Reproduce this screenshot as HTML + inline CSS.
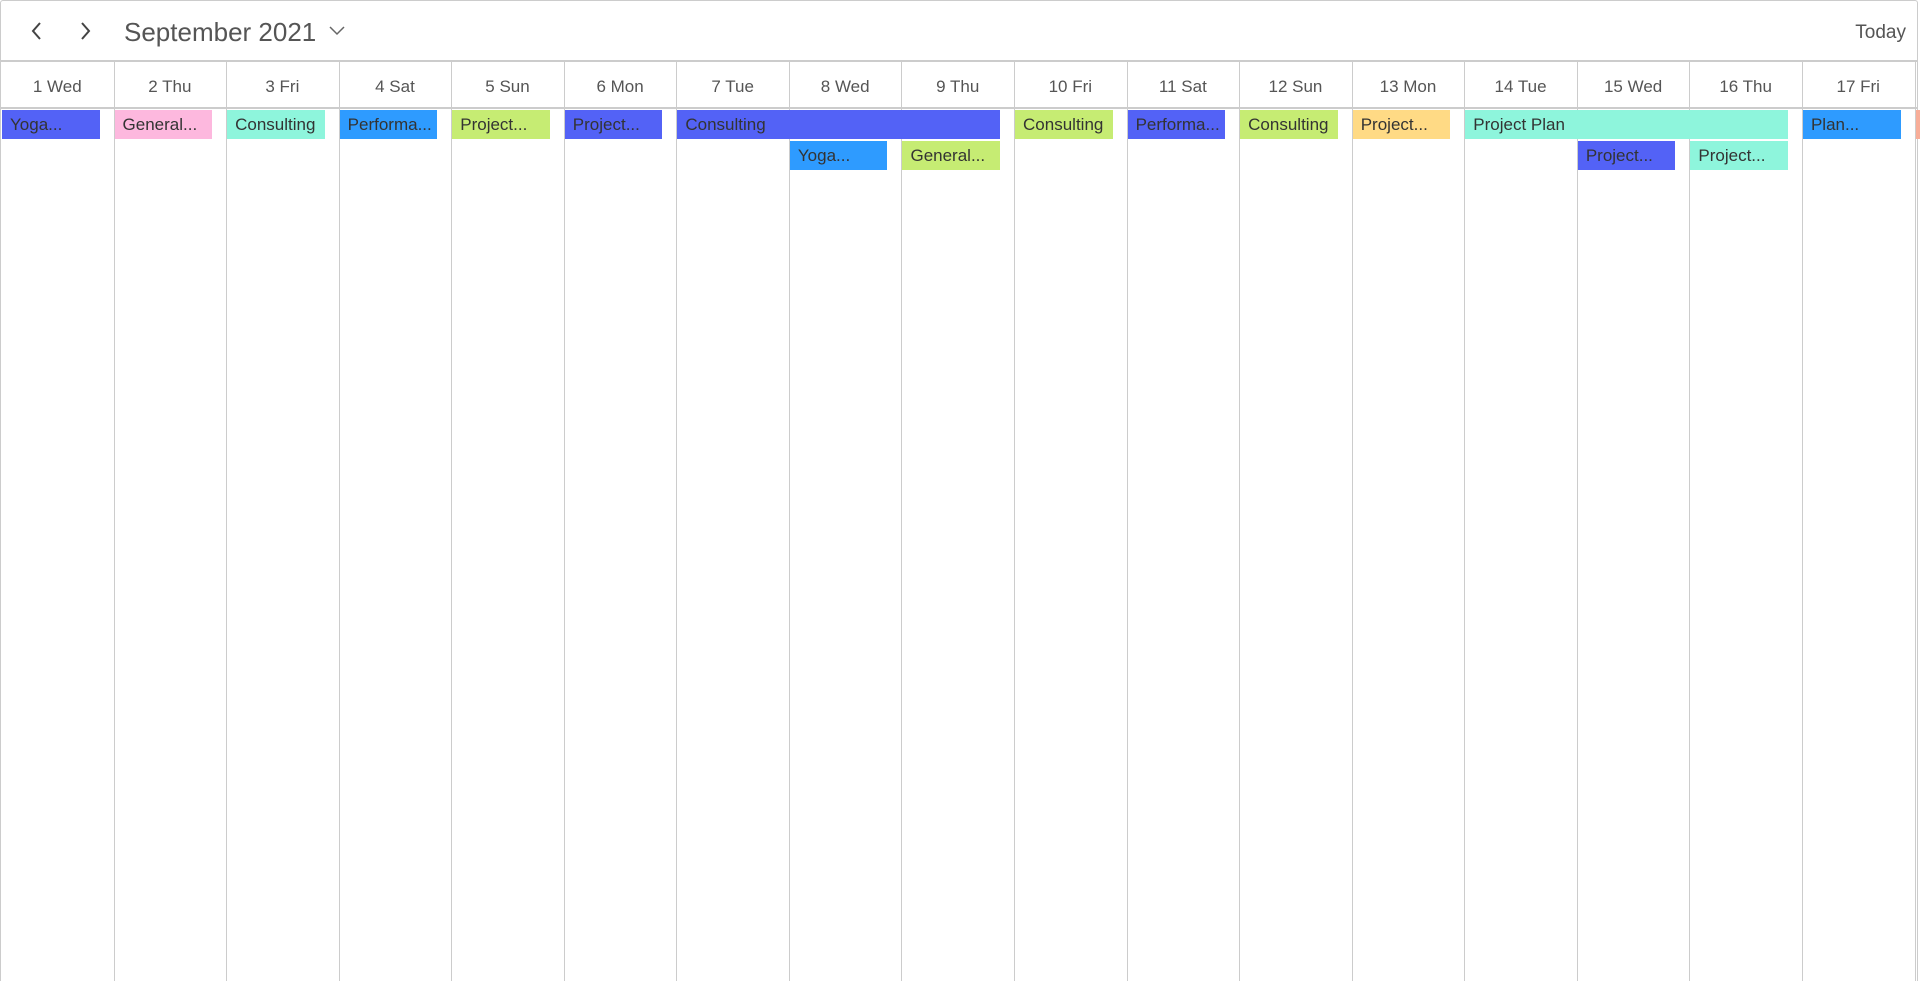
<!DOCTYPE html>
<html><head><meta charset="utf-8"><style>
body{margin:0;width:1920px;height:981px;overflow:hidden;background:#fff;font-family:"Liberation Sans",sans-serif;position:relative}
.frame{position:absolute;left:0;top:0;width:1918px;height:981px;border:1px solid #ccc;border-bottom:none;box-sizing:border-box;border-radius:3px 3px 0 0}
.top{position:absolute;left:0;top:0;width:1918px;height:62px;border-bottom:2px solid #ccc;box-sizing:border-box}
.title{position:absolute;left:124px;top:17px;font-size:26px;color:#555}
.today{position:absolute;right:12px;top:22px;font-size:19px;color:#555}
.col{position:absolute;top:62px;bottom:0;border-left:1px solid #ccc}
.hd{position:absolute;top:64px;height:46px;line-height:46px;text-align:center;font-size:17px;color:#555}
.hline{position:absolute;left:0;width:1918px;top:107px;height:2px;background:#ccc}
.ev{position:absolute;height:29px;line-height:30px;font-size:17px;color:#333;padding-left:8px;box-sizing:border-box;white-space:nowrap;overflow:hidden}
</style></head><body>
<div class="frame"></div>
<div class="top">
<svg style="position:absolute;left:30px;top:20px" width="14" height="22"><path d="M10 3 L3 11 L10 19" stroke="#444" stroke-width="2" fill="none"/></svg>
<svg style="position:absolute;left:78px;top:20px" width="14" height="22"><path d="M4 3 L11 11 L4 19" stroke="#444" stroke-width="2" fill="none"/></svg>
<div class="title">September 2021</div>
<svg style="position:absolute;left:328px;top:24px" width="18" height="12"><path d="M2 3 L9 10 L16 3" stroke="#666" stroke-width="1.5" fill="none"/></svg>
<div class="today">Today</div>
</div>
<div class="hline"></div>
<div id="c"></div>
<script>
var W=112.56,days=["1 Wed","2 Thu","3 Fri","4 Sat","5 Sun","6 Mon","7 Tue","8 Wed","9 Thu","10 Fri","11 Sat","12 Sun","13 Mon","14 Tue","15 Wed","16 Thu","17 Fri"];
var h="";
for(var i=0;i<18;i++){var l=1+W*i;if(i>0)h+='<div class="col" style="left:'+l+'px"></div>';if(i<17)h+='<div class="hd" style="left:'+l+'px;width:'+W+'px">'+days[i]+'</div>';}
var P="#5362F6",K="#FDB8DE",T="#8EF5DC",B="#2E9BFF",G="#C6EC73",Y="#FFDA85",S="#F8AD98";
var ev=[[0,1,0,P,"Yoga..."],[1,1,0,K,"General..."],[2,1,0,T,"Consulting"],[3,1,0,B,"Performa..."],[4,1,0,G,"Project..."],[5,1,0,P,"Project..."],[6,3,0,P,"Consulting"],[9,1,0,G,"Consulting"],[10,1,0,P,"Performa..."],[11,1,0,G,"Consulting"],[12,1,0,Y,"Project..."],[13,3,0,T,"Project Plan"],[16,1,0,B,"Plan..."],[17,1,0,S,""],[7,1,1,B,"Yoga..."],[8,1,1,G,"General..."],[14,1,1,P,"Project..."],[15,1,1,T,"Project..."]];
ev.forEach(function(e){var l=1+W*e[0]+1;var w=W*e[1]-15;if(e[0]==17)w=1920-l;h+='<div class="ev" style="left:'+l+'px;width:'+w+'px;top:'+(110+e[2]*31)+'px;background:'+e[3]+'">'+e[4]+'</div>';});
document.getElementById("c").innerHTML=h;
</script>
</body></html>
